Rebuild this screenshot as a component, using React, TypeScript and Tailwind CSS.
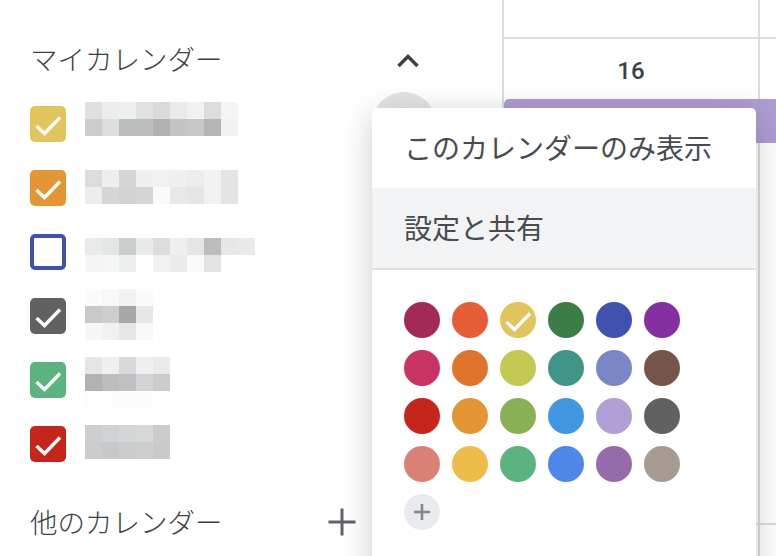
const calendars = [
  {
    color: "bg-[#e1c45b]",
    checked: true,
    blockTop: "mt-[10px]",
    lines: [
      ["#e0e0e0", "#ebecec", "#eef0f0", "#e0e2e2", "#dadada", "#e9eaea", "#f1f1f1", "#dcdcdc", "#f5f5f5"],
      ["#cdcdcd", "#dcdddd", "#bbbcbd", "#bcbdbe", "#b1b1b2", "#c3c4c6", "#c6c7c9", "#b4b5b6", "#f0f1f1"],
    ],
  },
  {
    color: "bg-[#e49634]",
    checked: true,
    blockTop: "mt-[14px]",
    lines: [
      ["#dcdcdc", "#eeeeee", "#d6d6d6", "#efefef", "#f1f1f1", "#f0f0f0", "#ebecec", "#f2f2f2", "#e4e4e4"],
      ["#ececec", "#d6d6d6", "#d1d2d3", "#d5d5d5", "#fafafa", "#e7e8e8", "#e4e6e6", "#f1f1f1", "#e2e3e3"],
    ],
  },
  {
    color: "",
    checked: false,
    blockTop: "mt-[18px]",
    lines: [
      ["#e9ebeb", "#e4e6e6", "#cccdce", "#e8eaea", "#dcdcdc", "#efefef", "#e5e5e5", "#bcbdbe", "#e7e7e7", "#e9e9e9"],
      ["#f5f5f5", "#f5f6f6", "#edefef", "#ffffff", "#f2f2f2", "#ebebeb", "#fafafa", "#e3e3e3"],
    ],
  },
  {
    color: "bg-[#616161]",
    checked: true,
    blockTop: "mt-[5px]",
    lines: [
      ["#fbfbfb", "#f8f8f8", "#f2f2f2", "#fbfbfb"],
      ["#c8c9ca", "#cdced0", "#a6a7a8", "#e6e8e8"],
      ["#f6f6f6", "#f1f1f1", "#e7e7e7", "#f8f8f8"],
    ],
  },
  {
    color: "bg-[#5bb47e]",
    checked: true,
    blockTop: "mt-[9px]",
    lines: [
      ["#e4e6e6", "#f0f0f0", "#d9d9d9", "#f0f0f0", "#eaeaea"],
      ["#b1b2b3", "#bbbcbd", "#bfc0c2", "#d3d4d7", "#cbcbcb"],
      ["#fdfdfd", "#fdfdfd", "#fcfcfc", "#fcfcfc", "#fefefe"],
    ],
  },
  {
    color: "bg-[#c4261c]",
    checked: true,
    blockTop: "mt-[13px]",
    lines: [
      ["#cdced0", "#d1d2d4", "#d5d6d7", "#d7d8da", "#cbcbcc"],
      ["#cbcccd", "#c7c8ca", "#cbcccd", "#cdcece", "#c9c9c9"],
    ],
  },
]

const swatches = [
  "#a32a56", "#e65c35", "#e1c45b", "#3a7d47", "#3f52ae", "#8430a2",
  "#c83362", "#e0742c", "#c4c952", "#419488", "#7a87c5", "#745548",
  "#c4261c", "#e49634", "#89b155", "#4298e0", "#ae9fd7", "#616161",
  "#da8175", "#edbc4a", "#5bb47e", "#4f86ea", "#956cab", "#a69b8e",
]

const Check = () => (
  <svg viewBox="0 0 36 36" className="w-9 h-9" fill="none" stroke="#fdfdfd" strokeWidth="3.4">
    <path d="M6.5 20 L14.5 27.5 L30 11.5" />
  </svg>
)

export default function App() {
  return (
    <div className="relative flex w-[776px] h-[556px] overflow-hidden bg-white text-[#3c4043] font-['Noto_Sans_CJK_JP','Liberation_Sans',sans-serif]">
      <aside className="w-[502px] shrink-0 pt-7 pl-[30px] font-light">
        <div className="flex justify-between items-center h-16 pr-[78px] text-[27.5px]">
          <span className="pb-0.5">マイカレンダー</span>
          <svg viewBox="0 0 32 32" className="w-8 h-8" fill="none" stroke="#3c4043" strokeWidth="3.5">
            <path d="M6.5 22 L16 12.5 L25.5 22" />
          </svg>
        </div>
        {calendars.map((cal, i) => (
          <div key={i} className="flex items-start h-16">
            {cal.checked ? (
              <div className={`mt-[14px] w-9 h-9 rounded-[5px] ${cal.color}`}>
                <Check />
              </div>
            ) : (
              <div className="mt-[14px] w-9 h-9 rounded-[5px] border-4 border-[#3f52ae]" />
            )}
            <div className={`ml-[19px] ${cal.blockTop}`}>
              {cal.lines.map((line, j) => (
                <div key={j} className="flex">
                  {line.map((c, k) => (
                    <div key={k} className="w-[17px] h-[17px]" style={{ backgroundColor: c }} />
                  ))}
                </div>
              ))}
            </div>
          </div>
        ))}
        <div className="flex justify-between items-center h-16 mt-[14px] pr-[146px] text-[27.5px]">
          <span>他のカレンダー</span>
          <svg viewBox="0 0 28 28" className="w-7 h-7" fill="none" stroke="#5f6368" strokeWidth="3">
            <path d="M14 0.5 V27.5 M0.5 14 H27.5" />
          </svg>
        </div>
      </aside>

      <main className="flex-1 border-l-2 border-[#dadce0] flex flex-col">
        <div className="flex h-[39px] shrink-0 border-b-2 border-[#dadce0]">
          <div className="w-[256px] border-r-2 border-[#dadce0]" />
        </div>
        <div className="flex h-[486px] shrink-0 border-b-2 border-[#dadce0]">
          <div className="relative w-[256px] border-r-2 border-[#dadce0] text-center">
            <div className="pt-4 text-2xl leading-8 font-medium font-['Roboto',sans-serif]">16</div>
            <div className="absolute left-0 top-[60px] w-[272px] h-11 rounded-tl-[5px] bg-[#ae9dd3]" />
          </div>
        </div>
        <div className="flex flex-1">
          <div className="w-[256px] border-r-2 border-[#dadce0]" />
        </div>
      </main>

      <div className="absolute left-[372px] top-[92px] w-16 h-16 rounded-full bg-[#e4e4e4]" />

      <div className="absolute left-[372px] top-[108px] w-[384px] h-[480px] bg-white rounded-[5px] shadow-[0_6px_32px_rgba(0,0,0,0.2)] text-[28px] text-[#484b4f]">
        <div className="flex items-center h-20 pl-8 pb-[3px]">このカレンダーのみ表示</div>
        <div className="flex items-center h-20 pl-8 pb-0.5 bg-[#f1f3f4]">設定と共有</div>
        <div className="h-0.5 bg-[#e0e0e0]" />
        <div className="grid grid-cols-[repeat(6,36px)] gap-3 pt-8 pl-8">
          {swatches.map((c, i) => (
            <div key={i} className="w-9 h-9 rounded-full" style={{ backgroundColor: c }}>
              {i === 2 && <Check />}
            </div>
          ))}
          <div className="flex justify-center items-center w-9 h-9 rounded-full bg-[#e8eaed]">
            <svg viewBox="0 0 16 16" className="w-4 h-4" fill="none" stroke="#80868b" strokeWidth="2.5">
              <path d="M8 0 V16 M0 8 H16" />
            </svg>
          </div>
        </div>
      </div>
    </div>
  )
}
